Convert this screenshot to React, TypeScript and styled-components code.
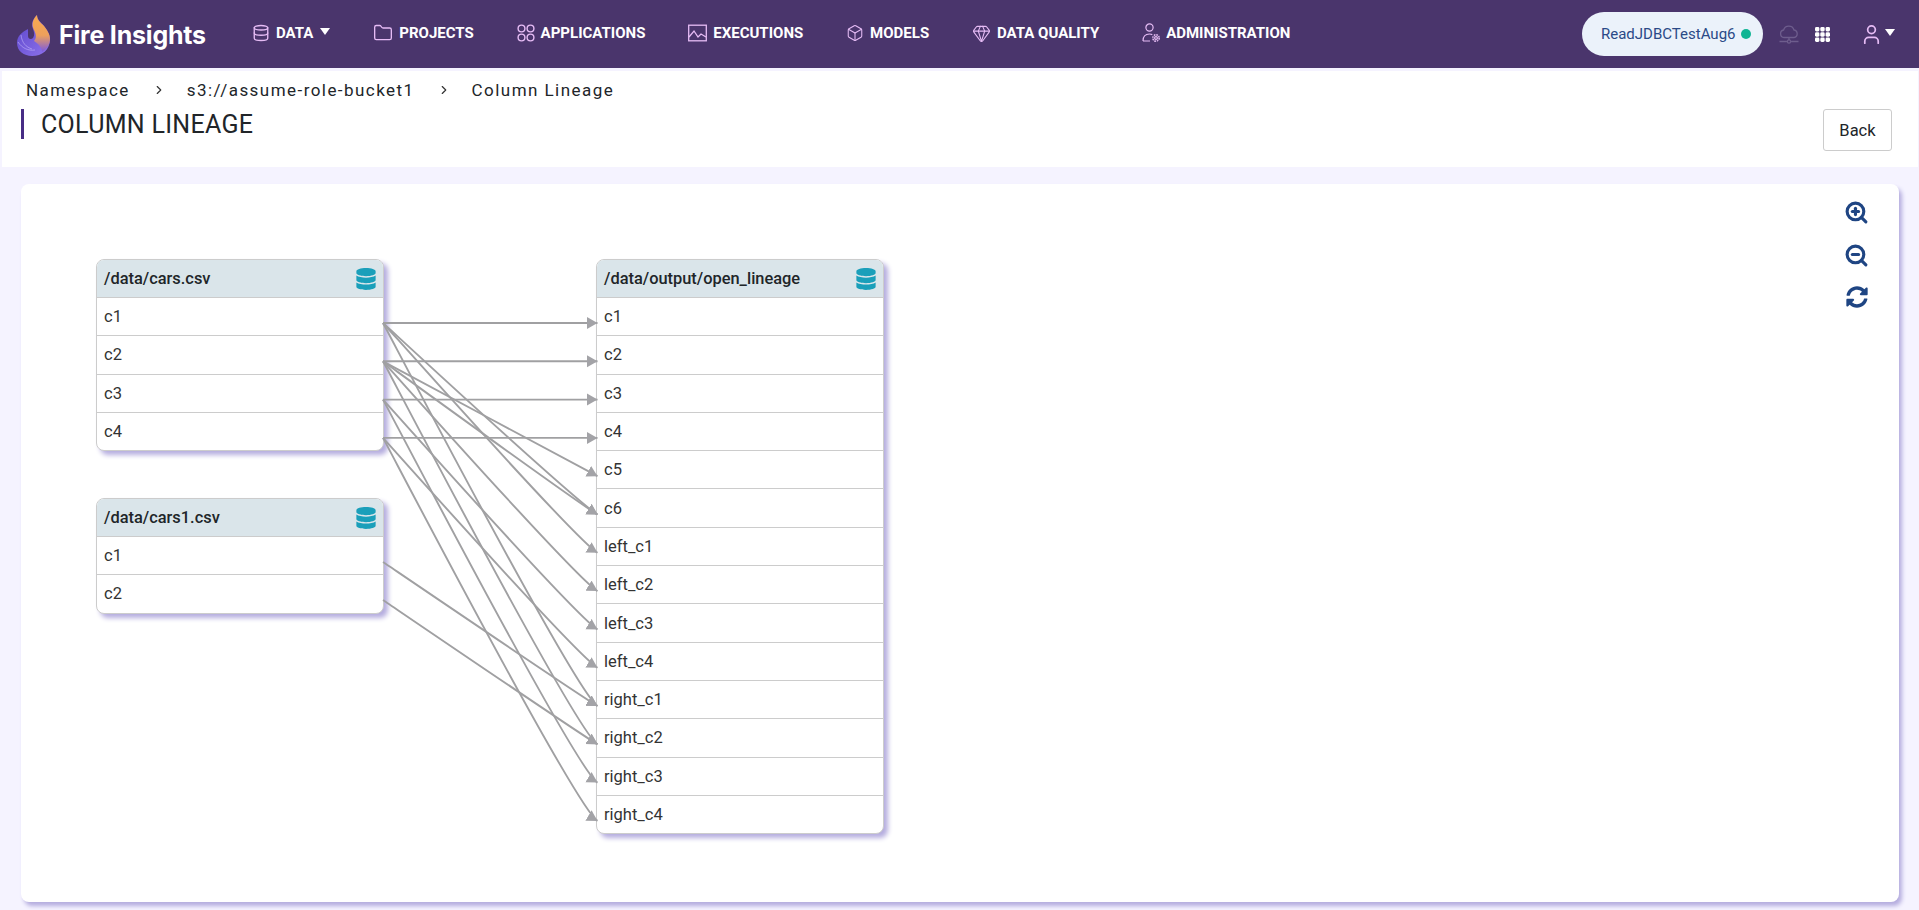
import styled, { createGlobalStyle } from 'styled-components';
import { Database, Folder, Box, Gem, ZoomIn, ZoomOut, ChevronRight, User } from 'lucide-react';
import { FaDatabase, FaSyncAlt } from 'react-icons/fa';

const GlobalStyle = createGlobalStyle`
  html, body {
    margin: 0;
    padding: 0;
    background: #f5f3ff;
    font-family: Roboto, "Liberation Sans", sans-serif;
    color: #212529;
  }
  * { box-sizing: border-box; }
`;

const Page = styled.div`
  height: 910px;
  overflow: hidden;
  display: flex;
  flex-direction: column;
`;

const TopBar = styled.header`
  height: 68px;
  flex: none;
  background: #4a356c;
  display: flex;
  align-items: center;
  padding: 0 24px 0 17px;
`;

const Logo = styled.div`
  width: 235px;
  flex: none;
  display: flex;
  align-items: center;
  gap: 9px;
  padding-top: 2px;
`;

const LogoText = styled.span`
  font-family: Inter, sans-serif;
  font-weight: 700;
  font-size: 25px;
  letter-spacing: -0.2px;
  color: #fff;
`;

const Nav = styled.nav`
  display: flex;
  align-items: center;
  gap: 42.9px;
  padding-bottom: 2px;
`;

const NavItem = styled.a`
  display: flex;
  align-items: center;
  gap: 6px;
  color: #fff;
  font-size: 15px;
  font-weight: 700;
  white-space: nowrap;
  svg { color: #e6bcf5; flex: none; }
`;

const Caret = styled.span<{ $gap?: number }>`
  width: 0;
  height: 0;
  margin-left: ${(p) => p.$gap ?? 2}px;
  margin-bottom: 3px;
  border-left: 5px solid transparent;
  border-right: 5px solid transparent;
  border-top: 7px solid #fff;
`;

const TopRight = styled.div`
  margin-left: auto;
  display: flex;
  align-items: center;
`;

const ContextPill = styled.div`
  width: 181px;
  height: 44px;
  border-radius: 22px;
  background: #ebf2fa;
  color: #2a4a87;
  font-size: 15px;
  display: flex;
  align-items: center;
  padding-left: 19px;
  gap: 5px;
  margin-right: 16px;
`;

const StatusDot = styled.span`
  width: 10px;
  height: 10px;
  border-radius: 50%;
  background: #10b594;
`;

const GridSpacer = styled.span`
  width: 16px;
`;

const UserMenu = styled.div`
  display: flex;
  align-items: center;
  margin-left: 30px;
  gap: 2px;
  color: #e6bcf5;
`;

const TitleBand = styled.section`
  height: 96px;
  flex: none;
  margin: 3px 1px 0 2px;
  background: #fff;
  padding: 9px 26px 0 19px;
  display: flex;
  justify-content: space-between;
`;

const Crumbs = styled.div`
  display: flex;
  align-items: center;
  font-size: 17px;
  letter-spacing: 1.45px;
  height: 20px;
  margin-left: 5px;
  svg { color: #333; margin: 0 21px 0 22px; }
`;

const PageTitle = styled.h1`
  margin: 9px 0 0;
  border-left: 3px solid #472d85;
  height: 30px;
  line-height: 32px;
  padding-left: 17px;
  font-size: 25px;
  font-weight: 400;
  letter-spacing: 0.3px;
`;

const BackButton = styled.button`
  width: 69px;
  height: 42px;
  margin-top: 29px;
  background: #fff;
  border: 1px solid #ccc;
  border-radius: 3px;
  font: 400 16.5px Roboto, sans-serif;
  color: #212529;
`;

const Canvas = styled.main`
  flex: 1;
  position: relative;
  margin: 17px 20px 8px 21px;
  background: #fff;
  border-radius: 8px;
  box-shadow: 3px 4px 4px #b5addf;
`;

const ZoomTools = styled.div`
  position: absolute;
  top: 16px;
  right: 30px;
  display: flex;
  flex-direction: column;
  align-items: center;
  gap: 18px;
  color: #1f4583;
`;

const TableNode = styled.div<{ $x: number; $y: number }>`
  position: absolute;
  left: ${(p) => p.$x}px;
  top: ${(p) => p.$y}px;
  width: 288px;
  border: 1px solid #ccc;
  border-radius: 8px;
  background: #fff;
  box-shadow: 4px 4px 5px #b5addf;
  overflow: hidden;
`;

const NodeHead = styled.div`
  height: 37px;
  background: #dae5ea;
  display: flex;
  align-items: center;
  justify-content: space-between;
  padding: 0 6px 0 7px;
  font-size: 16.4px;
  font-weight: 500;
  svg { color: #1a9fba; }
`;

const NodeRow = styled.div`
  height: 38.3px;
  border-top: 1px solid #ccc;
  display: flex;
  align-items: center;
  padding-left: 7px;
  font-size: 16.5px;
  color: #333;
`;

const EdgeLayer = styled.svg`
  position: absolute;
  inset: 0;
  width: 100%;
  height: 100%;
  pointer-events: none;
`;

const sourceX = 362;
const targetX = 576.5;
const rowGap = 38.3;
const firstRowY = 139;

const outputCols = [
  'c1', 'c2', 'c3', 'c4', 'c5', 'c6',
  'left_c1', 'left_c2', 'left_c3', 'left_c4',
  'right_c1', 'right_c2', 'right_c3', 'right_c4',
];

// [source y, target row]
const src = (i: number) => firstRowY + i * rowGap;
const edges: [number, string][] = [
  [src(0), 'c1'], [src(0), 'c6'], [src(0), 'left_c1'], [src(0), 'right_c1'],
  [src(1), 'c2'], [src(1), 'c5'], [src(1), 'c6'], [src(1), 'left_c2'], [src(1), 'right_c2'],
  [src(2), 'c3'], [src(2), 'left_c3'], [src(2), 'right_c3'],
  [src(3), 'c4'], [src(3), 'left_c4'], [src(3), 'right_c4'],
  [378, 'right_c1'], [416, 'right_c2'],
];

function edgePath(sy: number, target: string) {
  const ty = firstRowY + outputCols.indexOf(target) * rowGap;
  if (ty === sy) return `M${sourceX} ${sy} L${targetX} ${ty}`;
  const slope = (ty - sy) / (targetX - sourceX);
  const c1x = sourceX + 8;
  const c2x = targetX - 22;
  return `M${sourceX} ${sy} C${c1x} ${sy + 8 * slope} ${c2x} ${ty - 22 * Math.min(0.6, slope)} ${targetX} ${ty}`;
}

const AppsIcon = () => (
  <svg width="18" height="18" viewBox="0 0 18 18" fill="none" stroke="currentColor" strokeWidth="1.4">
    <circle cx="4.5" cy="4.5" r="3.4" />
    <circle cx="13.5" cy="4.5" r="3.4" />
    <circle cx="4.5" cy="13.5" r="3.4" />
    <circle cx="13.5" cy="13.5" r="3.4" />
  </svg>
);

const ExecIcon = () => (
  <svg width="19" height="18" viewBox="0 0 19 18" fill="none" stroke="currentColor" strokeWidth="1.3">
    <rect x="0.7" y="1.2" width="17.6" height="15.6" />
    <path d="M1 13l5-6 4 6 3-3 5 3" />
  </svg>
);

const AdminIcon = () => (
  <svg width="18" height="20" viewBox="0 0 18 20" fill="none" stroke="currentColor" strokeWidth="1.2">
    <circle cx="7.5" cy="4.5" r="3.6" />
    <path d="M1 18c0-5 3-7 6.5-7 1 0 2 .2 2.8.6M1 18h7" />
    <circle cx="14" cy="15" r="1.4" />
    <circle cx="14" cy="15" r="3.2" strokeDasharray="1.6 0.9" strokeWidth="1.5" />
  </svg>
);

const CloudIcon = () => (
  <svg width="20" height="20" viewBox="0 0 20 20" fill="none" stroke="#6e5d8d" strokeWidth="1.3">
    <path d="M5 13.5a3.8 3.8 0 0 1-.4-7.5 5.4 5.4 0 0 1 10.4 0 3.8 3.8 0 0 1 0 7.5z" />
    <path d="M10 13.5v2.5M0.5 17.5h7.5M12 17.5h7.5" />
    <circle cx="10" cy="17.5" r="1.6" />
  </svg>
);

const GridIcon = () => (
  <svg width="15" height="15" viewBox="0 0 15 15" fill="#fff">
    {[0, 1, 2].flatMap((r) =>
      [0, 1, 2].map((c) => <rect key={`${r}${c}`} x={c * 5.3} y={r * 5.3} width="4.4" height="4.4" rx="1.4" />),
    )}
  </svg>
);

const FlameLogo = () => (
  <svg width="33" height="41" viewBox="0 0 33 41">
    <defs>
      <linearGradient id="flame" x1="0.5" y1="0" x2="0.5" y2="1">
        <stop offset="0.05" stopColor="#f8a94f" />
        <stop offset="0.55" stopColor="#eda05c" />
        <stop offset="1" stopColor="#7a58e0" />
      </linearGradient>
      <linearGradient id="body" x1="0" y1="0" x2="1" y2="1">
        <stop offset="0" stopColor="#5a44c8" />
        <stop offset="1" stopColor="#8f74ee" />
      </linearGradient>
    </defs>
    <path d="M11 14C5 17 0 21 0 28c0 8 7 13 15 13 10 0 18-6 18-17 0-5-3-9-6-13-3-4-7-6-7-11-3 3-7 8-4 14 1 3 2 6 0 9-2 2-5 1-5-2 0-2 0-5 0-7z" fill="url(#body)" />
    <path d="M20 0c-4 4-6 9-3 15 2 4 3 8 0 11 5 3 8 7 8 11 5-3 8-8 8-13 0-5-3-9-6-13-3-3-7-6-7-11z" fill="url(#flame)" />
    <path d="M1 27c4 6 10 9 17 8M4 20c1 8 5 12 11 14" fill="none" stroke="#b7a6f5" strokeWidth="1" opacity="0.7" />
  </svg>
);

export default function App() {
  return (
    <Page>
      <GlobalStyle />
      <TopBar>
        <Logo>
          <FlameLogo />
          <LogoText>Fire Insights</LogoText>
        </Logo>
        <Nav>
          <NavItem>
            <Database size={18} strokeWidth={1.8} />
            DATA
            <Caret $gap={1} />
          </NavItem>
          <NavItem><Folder size={20} strokeWidth={1.6} />PROJECTS</NavItem>
          <NavItem><AppsIcon />APPLICATIONS</NavItem>
          <NavItem><ExecIcon />EXECUTIONS</NavItem>
          <NavItem><Box size={18} strokeWidth={1.4} />MODELS</NavItem>
          <NavItem><Gem size={19} strokeWidth={1.4} />DATA QUALITY</NavItem>
          <NavItem><AdminIcon />ADMINISTRATION</NavItem>
        </Nav>
        <TopRight>
          <ContextPill>ReadJDBCTestAug6<StatusDot /></ContextPill>
          <CloudIcon />
          <GridSpacer />
          <GridIcon />
          <UserMenu>
            <User size={23} strokeWidth={1.8} />
            <Caret $gap={0} />
          </UserMenu>
        </TopRight>
      </TopBar>

      <TitleBand>
        <div>
          <Crumbs>
            Namespace<ChevronRight size={14} />
            s3://assume-role-bucket1<ChevronRight size={14} />
            Column Lineage
          </Crumbs>
          <PageTitle>COLUMN LINEAGE</PageTitle>
        </div>
        <BackButton>Back</BackButton>
      </TitleBand>

      <Canvas>
        <ZoomTools>
          <ZoomIn size={25} strokeWidth={3} />
          <ZoomOut size={25} strokeWidth={3} />
          <FaSyncAlt size={22} />
        </ZoomTools>

        <TableNode $x={75} $y={75}>
          <NodeHead>/data/cars.csv<FaDatabase size={22} /></NodeHead>
          {['c1', 'c2', 'c3', 'c4'].map((c) => <NodeRow key={c}>{c}</NodeRow>)}
        </TableNode>

        <TableNode $x={75} $y={314}>
          <NodeHead>/data/cars1.csv<FaDatabase size={22} /></NodeHead>
          {['c1', 'c2'].map((c) => <NodeRow key={c}>{c}</NodeRow>)}
        </TableNode>

        <TableNode $x={575} $y={75}>
          <NodeHead>/data/output/open_lineage<FaDatabase size={22} /></NodeHead>
          {outputCols.map((c) => <NodeRow key={c}>{c}</NodeRow>)}
        </TableNode>

        <EdgeLayer>
          <defs>
            <marker id="arrow" markerUnits="userSpaceOnUse" markerWidth="11" markerHeight="13" refX="10.5" refY="6.5" orient="auto">
              <path d="M0 0.5L10.5 6.5L0 12.5z" fill="#a3a3a7" />
            </marker>
          </defs>
          {edges.map(([sy, target]) => (
            <path
              key={`${sy}-${target}`}
              d={edgePath(sy, target)}
              fill="none"
              stroke="#a0a0a2"
              strokeWidth="1.9"
              markerEnd="url(#arrow)"
            />
          ))}
        </EdgeLayer>
      </Canvas>
    </Page>
  );
}
